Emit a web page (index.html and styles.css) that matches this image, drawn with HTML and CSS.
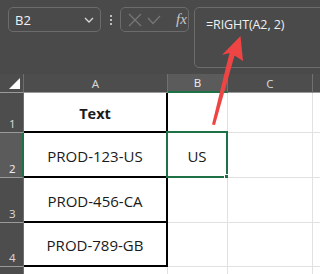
FILE: index.html
```html
<!DOCTYPE html>
<html>
<head>
<meta charset="utf-8">
<link rel="stylesheet" href="styles.css">
</head>
<body>
<div class="page">
  <div class="toolbar">
    <div class="namebox">
      <span class="name">B2</span>
      <svg class="chev" width="10" height="6" viewBox="0 0 10 6"><path d="M1 1 L5 5 L9 1" fill="none" stroke="#d8d8d8" stroke-width="1.3"/></svg>
    </div>
    <div class="dots"><i></i><i></i><i></i></div>
    <div class="fxbox">
      <svg width="14" height="14" viewBox="0 0 14 14"><path d="M1 1 L13 13 M13 1 L1 13" stroke="#767676" stroke-width="1.3" fill="none"/></svg>
      <svg width="14" height="10" viewBox="0 0 14 10"><path d="M1 3 L6 8.5 L13 1" stroke="#767676" stroke-width="1.3" fill="none"/></svg>
      <span class="fx">fx</span>
    </div>
    <div class="formula">=RIGHT(A2, 2)</div>
  </div>
  <div class="grid">
    <div class="corner"><span class="tri"></span></div>
    <div class="colh">A</div>
    <div class="colh sel">B</div>
    <div class="colh">C</div>
    <div class="colh last"></div>

    <div class="rowh">1</div>
    <div class="cell a top bold">Text</div>
    <div class="cell"></div>
    <div class="cell"></div>
    <div class="cell last"></div>

    <div class="rowh sel">2</div>
    <div class="cell a">PROD-123-US</div>
    <div class="cell active">US<span class="handle"></span></div>
    <div class="cell"></div>
    <div class="cell last"></div>

    <div class="rowh">3</div>
    <div class="cell a">PROD-456-CA</div>
    <div class="cell"></div>
    <div class="cell"></div>
    <div class="cell last"></div>

    <div class="rowh">4</div>
    <div class="cell a">PROD-789-GB</div>
    <div class="cell"></div>
    <div class="cell"></div>
    <div class="cell last"></div>

    <div class="rowh"></div>
    <div class="cell"></div>
    <div class="cell"></div>
    <div class="cell"></div>
    <div class="cell last"></div>
  </div>
  <svg class="arrow" width="320" height="274" viewBox="0 0 320 274">
    <path d="M240.5 36 L243 61 L234.5 55.5 L215 125 L212 124.5 L229.5 53 L222 55 Z" fill="#ee4444"/>
  </svg>
</div>
</body>
</html>
```
FILE: styles.css
```css
* { box-sizing: border-box; }
html, body { margin: 0; padding: 0; }
body {
  width: 320px;
  height: 274px;
  overflow: hidden;
  background: #4a4a4a;
  font-family: "Open Sans", "Liberation Sans", sans-serif;
}
.page { position: relative; width: 320px; height: 274px; overflow: hidden; }
.toolbar {
  display: flex;
  align-items: flex-start;
  height: 74px;
  padding: 7px 0 0 8px;
}
.toolbar > * { flex-shrink: 0; }
.namebox {
  width: 93px;
  height: 25px;
  border: 1px solid #6c6c6c;
  border-radius: 5px;
  display: flex;
  align-items: center;
  justify-content: space-between;
  padding: 0 6px 0 6px;
}
.name { color: #f2f2f2; font-size: 13px; }
.chev { margin-top: 1px; }
.dots {
  display: flex;
  flex-direction: column;
  gap: 2px;
  margin: 8px 0 0 9px;
  width: 2px;
}
.dots i { display: block; width: 2px; height: 2px; background: #bdbdbd; }
.fxbox {
  margin-left: 8px;
  width: 69px;
  height: 25px;
  border: 1px solid #6c6c6c;
  border-radius: 5px;
  display: flex;
  align-items: center;
  padding: 0 0 0 7px;
  gap: 5px;
}
.fx {
  margin-left: 10px;
  color: #c8c8c8;
  font-family: "Liberation Serif", serif;
  font-style: italic;
  font-size: 15px;
}
.formula {
  margin-left: 5px;
  width: 160px;
  height: 61px;
  border: 1px solid #6c6c6c;
  border-radius: 5px;
  color: #f0f0f0;
  font-size: 12.5px;
  padding: 8px 0 0 11px;
  letter-spacing: -0.1px;
}
.grid {
  display: grid;
  grid-template-columns: 24px 144px 60px 85px 20px;
  grid-template-rows: 19px 40px 45px 45px 44px 20px;
}
.corner {
  background: #4d4d4d;
  border-right: 1px solid #6e6e6e;
  border-bottom: 1px solid #9a9a9a;
  position: relative;
}
.tri {
  position: absolute;
  right: 3px;
  bottom: 3px;
  width: 0; height: 0;
  border-left: 11px solid transparent;
  border-bottom: 11px solid #ffffff;
}
.colh {
  background: #4d4d4d;
  color: #d6d6d6;
  font-size: 11.5px;
  font-family: "Noto Sans", sans-serif;
  display: flex;
  align-items: center;
  justify-content: center;
  border-right: 1px solid #707070;
  border-bottom: 1px solid #9a9a9a;
}
.colh.sel { background: #5b5b5b; border-bottom: 2px solid #1e7145; color: #e8e8e8; }
.colh.last { border-right: none; }
.rowh {
  background: #4d4d4d;
  color: #d6d6d6;
  font-size: 11.5px;
  font-family: "Noto Sans", sans-serif;
  display: flex;
  align-items: flex-end;
  padding: 0 0 1px 9px;
  border-right: 1px solid #6e6e6e;
  border-bottom: 1px solid #9a9a9a;
}
.rowh.sel { background: #5b5b5b; border-right: 2px solid #1e7145; color: #ececec; }
.cell {
  background: #ffffff;
  border-right: 1px solid #e1e1e1;
  border-bottom: 1px solid #e1e1e1;
  display: flex;
  align-items: center;
  justify-content: center;
  font-size: 15px;
  color: #1a1a1a;
  position: relative;
}
.cell.last { border-right: none; }
.cell.a {
  border-right: 2px solid #000;
  border-bottom: 2px solid #000;
  padding-top: 2px;
}
.bold { font-weight: bold; font-size: 14.5px; }
.cell.active {
  border: 2px solid #1e7145;
  margin: -2px 0 0 -2px;
  padding-top: 2px;
}
.handle {
  position: absolute;
  right: -4px;
  bottom: -4px;
  width: 6px;
  height: 6px;
  background: #1e7145;
  border: 1px solid #fff;
}
.arrow { position: absolute; left: 0; top: 0; pointer-events: none; }
```
